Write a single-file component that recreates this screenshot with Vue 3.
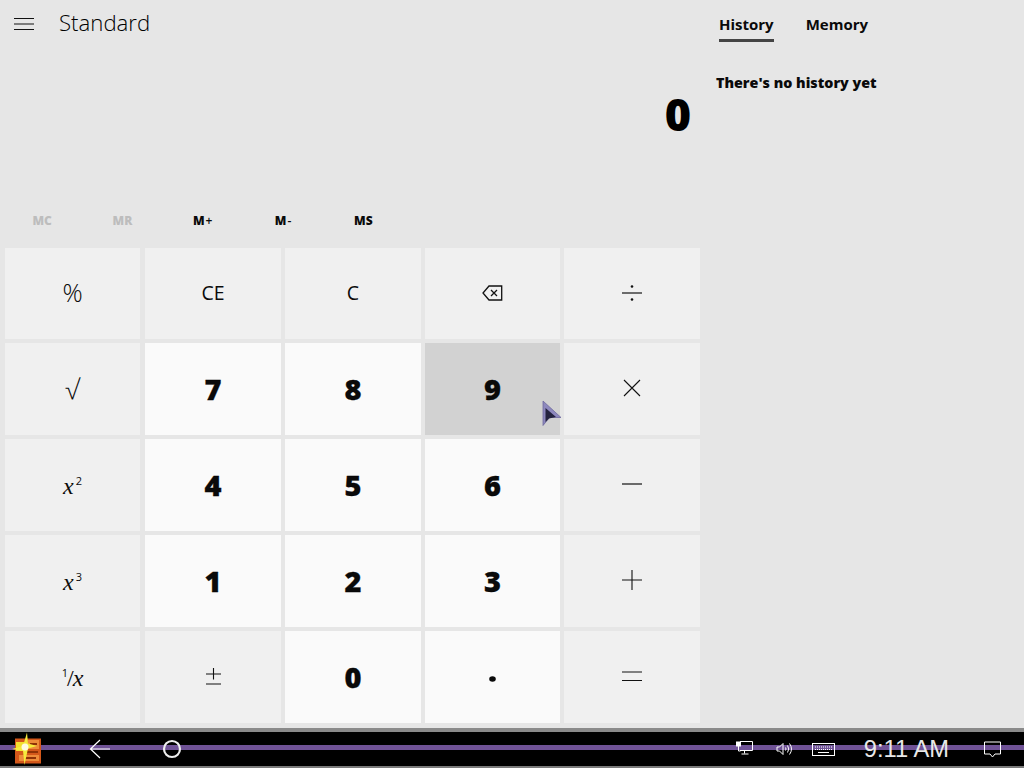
<script setup>
const memory = [
  { label: 'MC', off: true },
  { label: 'MR', off: true },
  { label: 'M', small: '+' },
  { label: 'M', small: '-' },
  { label: 'MS' },
]
const keys = [
  { id: 'pct', text: '%', kind: 'fn', cls: 'big' },
  { id: 'ce', text: 'CE', kind: 'fn' },
  { id: 'c', text: 'C', kind: 'fn' },
  { id: 'back', icon: 'back', kind: 'fn' },
  { id: 'div', icon: 'div', kind: 'fn' },
  { id: 'sqrt', text: '√', kind: 'fn', cls: 'root' },
  { id: '7', text: '7', kind: 'num' },
  { id: '8', text: '8', kind: 'num' },
  { id: '9', text: '9', kind: 'hover' },
  { id: 'mul', icon: 'mul', kind: 'fn' },
  { id: 'sq', math: 'x', sup: '2', kind: 'fn' },
  { id: '4', text: '4', kind: 'num' },
  { id: '5', text: '5', kind: 'num' },
  { id: '6', text: '6', kind: 'num' },
  { id: 'sub', icon: 'sub', kind: 'fn' },
  { id: 'cu', math: 'x', sup: '3', kind: 'fn' },
  { id: '1', text: '1', kind: 'num' },
  { id: '2', text: '2', kind: 'num' },
  { id: '3', text: '3', kind: 'num' },
  { id: 'add', icon: 'add', kind: 'fn' },
  { id: 'inv', math: 'x', pre: '1', kind: 'fn' },
  { id: 'neg', icon: 'neg', kind: 'fn' },
  { id: '0', text: '0', kind: 'num' },
  { id: 'dot', icon: 'dot', kind: 'num' },
  { id: 'eq', icon: 'eq', kind: 'fn' },
]
</script>

<template>
  <div class="screen">
    <div class="main">
      <section class="calc">
        <header class="head">
          <svg class="burger" width="20" height="14" viewBox="0 0 20 14">
            <path d="M0 1.500H20M0 7H20M0 12.500H20" stroke="#111" stroke-width="1.200" fill="none" />
          </svg>
          <h1 class="title">Standard</h1>
        </header>
        <div class="display">0</div>
        <div class="memory">
          <span v-for="m in memory" :key="m.label + (m.small || '')" class="mem" :class="{ off: m.off }">
            {{ m.label }}<small v-if="m.small">{{ m.small }}</small>
          </span>
        </div>
        <div class="keys">
          <button v-for="k in keys" :key="k.id" class="key" :class="[k.kind, k.cls]">
            <template v-if="k.text">{{ k.text }}</template>
            <span v-else-if="k.math" class="math">
              <sup v-if="k.pre" class="pre">{{ k.pre }}</sup><span v-if="k.pre" class="slash">/</span><i>{{ k.math }}</i><sup v-if="k.sup">{{ k.sup }}</sup>
            </span>
            <svg v-else-if="k.icon === 'back'" width="21" height="16" viewBox="0 0 21 16" fill="none" stroke="#111" stroke-width="1.300">
              <path d="M19.700 1H7L1 8l6 7h12.700z" /><path d="M9 5l6 6M15 5l-6 6" />
            </svg>
            <svg v-else-if="k.icon === 'div'" width="20" height="18" viewBox="0 0 20 18">
              <path d="M0 9H20" stroke="#111" stroke-width="1.200" /><circle cx="10" cy="2.500" r="1.300" fill="#111" /><circle cx="10" cy="15.500" r="1.300" fill="#111" />
            </svg>
            <svg v-else-if="k.icon === 'mul'" width="18" height="18" viewBox="0 0 18 18" fill="none" stroke="#111" stroke-width="1.100">
              <path d="M1 1l16 16M17 1L1 17" />
            </svg>
            <svg v-else-if="k.icon === 'sub'" width="20" height="2" viewBox="0 0 20 2">
              <path d="M0 1H20" stroke="#111" stroke-width="1.200" />
            </svg>
            <svg v-else-if="k.icon === 'add'" width="20" height="20" viewBox="0 0 20 20" fill="none" stroke="#111" stroke-width="1.100">
              <path d="M0 10H20M10 0V20" />
            </svg>
            <svg v-else-if="k.icon === 'neg'" width="15" height="17" viewBox="0 0 15 17" fill="none" stroke="#111" stroke-width="1.100">
              <path d="M0 6H15M7.500 0V11.500M0 16H15" />
            </svg>
            <svg v-else-if="k.icon === 'dot'" class="dot" width="7" height="6" viewBox="0 0 7 6">
              <ellipse cx="3.500" cy="3" rx="3.300" ry="2.700" fill="#0a0a0a" />
            </svg>
            <svg v-else-if="k.icon === 'eq'" width="20" height="11" viewBox="0 0 20 11" fill="none" stroke="#111" stroke-width="1.100">
              <path d="M0 1H20M0 9.500H20" />
            </svg>
          </button>
        </div>
      </section>
      <aside class="side">
        <nav class="tabs">
          <span class="tab active">History</span>
          <span class="tab">Memory</span>
        </nav>
        <p class="empty">There's no history yet</p>
      </aside>
      <svg class="cursor" width="20" height="27" viewBox="0 0 20 27">
        <path d="M1 1L19 17.500H7.500L1 25.500z" fill="#8d88bd" stroke="#6e699e" stroke-width="0.800" />
        <path d="M3.500 8L14 17L7 18.500L3.500 22z" fill="#24233f" />
      </svg>
    </div>
    <footer class="taskbar">
      <div class="stripe"></div>
      <svg class="logo" width="34" height="34" viewBox="0 0 34 34">
        <rect x="4" y="6.500" width="26" height="25" fill="#d4581a" />
        <path d="M17 8h11v9H17zM8 23h20v6H8z" fill="#ee8c3a" />
        <path d="M19 11h7v2h-7zM14 19h13v2H14zM14 25h11v2H14z" fill="#8f3206" />
        <path d="M5 10h10v9H5z" fill="#f2df2e" />
        <path d="M16 0.500l1 11 9 2.500-9 2.500-3.500 16.500-1.500-14-11-2 11-3z" fill="#f6ea3c" />
        <circle cx="14" cy="15" r="3.500" fill="#fffbe0" />
      </svg>
      <svg class="back" width="22" height="20" viewBox="0 0 22 20" fill="none" stroke="#fff" stroke-width="1.200">
        <path d="M21 10H1.500M11 1L1.500 10l9.500 9" />
      </svg>
      <svg class="home" width="20" height="20" viewBox="0 0 20 20" fill="none" stroke="#eee" stroke-width="2.200">
        <circle cx="10" cy="10" r="8" />
      </svg>
      <div class="tray">
        <svg class="net" width="17" height="15" viewBox="0 0 17 15" fill="none" stroke="#fff" stroke-width="1">
          <path d="M4 1.500h12.500v9H4M8.500 10.500v3M5.500 14h7" /><rect x="0.500" y="2" width="4" height="4" fill="#fff" /><path d="M2.500 6v5h2" />
        </svg>
        <svg class="vol" width="17" height="14" viewBox="0 0 17 14" fill="none" stroke="#fff" stroke-width="1">
          <path d="M1 5v4h2.500L7 12.500v-11L3.500 5zM9.500 5.500q1 1.500 0 3M11.500 3.500q2.500 3.500 0 7M13.500 1.500q4 5.500 0 11" />
        </svg>
        <svg class="kbd" width="23" height="13" viewBox="0 0 23 13" fill="none" stroke="#fff" stroke-width="1">
          <rect x="0.500" y="0.500" width="22" height="12" /><path d="M3 4h17M3 6.500h17" stroke-dasharray="1 1" /><path d="M6 9.500h11" />
        </svg>
        <span class="clock">9:11 AM</span>
        <svg class="note" width="17" height="17" viewBox="0 0 17 17" fill="none" stroke="#fff" stroke-width="1">
          <path d="M0.500 1h16v12h-5.500L8.500 16 6 13H0.500z" />
        </svg>
      </div>
    </footer>
  </div>
</template>

<style>
html, body { margin: 0; background: #e6e6e6; }
</style>

<style scoped>
.screen {
  position: relative;
  width: 1024px;
  height: 768px;
  display: flex;
  flex-direction: column;
  overflow: hidden;
  background: #e6e6e6;
  font-family: "Open Sans", "Noto Sans", sans-serif;
  color: #000;
}
.main {
  position: relative;
  display: flex;
  height: 728px;
  flex: none;
}
.calc {
  width: 704px;
  flex: none;
}
.head {
  display: flex;
  align-items: center;
  height: 48px;
  padding-left: 14px;
}
.burger { flex: none; }
.title {
  margin: 0 0 2px 25px;
  font-size: 22.200px;
  font-weight: 300;
  line-height: 46px;
  color: #000;
}
.display {
  height: 152px;
  padding: 36px 13px 0 0;
  box-sizing: border-box;
  font-family: "Noto Sans", sans-serif;
  font-size: 45px;
  line-height: 60px;
  font-weight: 900;
  text-align: right;
}
.memory {
  display: flex;
  height: 48px;
  padding: 5px 0 0 2px;
  box-sizing: border-box;
}
.mem {
  width: 80.300px;
  text-align: center;
  font-size: 12px;
  font-weight: 800;
  line-height: 32px;
  color: #0a0a0a;
}
.mem small { font-size: 12px; font-weight: 600; margin-left: 1px; }
.mem.off { color: #bdbdbd; }
.keys {
  display: grid;
  grid-template-columns: 136px 137px 136px 135px 136px;
  grid-template-rows: 91px 92px 92px 92px 92px;
  gap: 4px;
  padding-left: 4px;
}
.key {
  display: flex;
  align-items: center;
  justify-content: center;
  border: 0;
  padding: 0 0 2px;
  margin: 0;
  font-family: inherit;
  color: #0a0a0a;
  font-size: 19.500px;
  line-height: 1;
  background: #f0f0f0;
}
.key:nth-child(5n+1), .key:nth-child(5n+2) { margin-left: 1px; }
.big { font-size: 25px; font-weight: 300; }
.root { font-size: 27px; font-weight: 300; }
.num, .hover {
  font-family: "Noto Sans", sans-serif;
  font-size: 29px;
  font-weight: 900;
  padding-bottom: 2px;
  -webkit-text-stroke: 0.3px #000;
}
.num { background: #fafafa; }
.hover { background: #d2d2d2; }
.dot { margin-top: 6px; }
.math {
  font-family: "Liberation Serif", serif;
  font-size: 24px;
  display: inline-flex;
  align-items: flex-start;
  line-height: 24px;
  padding-top: 3px;
}
.math i { font-style: italic; }
.math sup {
  font-family: "Open Sans", sans-serif;
  font-size: 11px;
  line-height: 14px;
  margin-left: 2px;
  vertical-align: baseline;
}
.math sup.pre { margin: 0; }
.slash { margin: 0 -1px; }
.side {
  flex: 1;
  min-width: 0;
}
.tabs {
  display: flex;
  gap: 32px;
  padding: 12px 0 0 15px;
}
.tab {
  font-size: 15px;
  font-weight: 700;
  line-height: 24px;
  padding-bottom: 3px;
  border-bottom: 3px solid transparent;
  color: #0a0a0a;
}
.tab.active { border-color: #444; }
.empty {
  margin: 29px 0 0 12px;
  font-size: 14.300px;
  line-height: 24px;
  font-weight: 800;
  color: #0a0a0a;
}
.cursor {
  position: absolute;
  left: 542px;
  top: 400px;
}
.taskbar {
  position: relative;
  flex: 1;
  display: flex;
  align-items: center;
  box-sizing: border-box;
  background: #000;
  border-top: 4px solid #8a8a8a;
  border-bottom: 5px solid #7a7a7a;
  padding-left: 11px;
}
.stripe {
  position: absolute;
  left: 0;
  right: 0;
  top: 13px;
  height: 5px;
  background: #6f5296;
}
.logo {
  position: relative;
  flex: none;
}
.back {
  position: relative;
  margin-left: 44px;
  flex: none;
}
.home {
  position: relative;
  margin-left: 51px;
  flex: none;
}
.tray {
  position: relative;
  margin-left: auto;
  display: flex;
  align-items: center;
  padding-right: 23px;
}
.net { margin-top: -3px; }
.vol { margin-left: 23px; }
.kbd { margin-left: 19px; }
.clock {
  margin-left: 29px;
  font-family: "Liberation Sans", Arial, sans-serif;
  font-size: 23.700px;
  line-height: 30px;
  color: #e8e8e8;
}
.note { margin-left: 35px; }
</style>
